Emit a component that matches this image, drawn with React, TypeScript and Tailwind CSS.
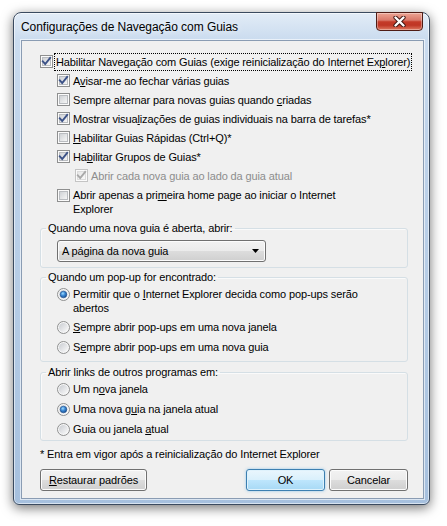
import React from "react";

function Check({ checked = false, disabled = false }: { checked?: boolean; disabled?: boolean }) {
  return (
    <svg width="13" height="13" viewBox="0 0 13 13" className="shrink-0 block">
      <defs>
        <linearGradient id={disabled ? "cbgd" : "cbg"} x1="0" y1="0" x2="1" y2="1">
          <stop offset="0" stopColor={disabled ? "#e6e6e6" : "#cdd0d4"} />
          <stop offset="1" stopColor={disabled ? "#fbfbfb" : "#f8f8f8"} />
        </linearGradient>
      </defs>
      <rect x="0.5" y="0.5" width="12" height="12" fill="#fbfbfb" stroke={disabled ? "#c4c4c4" : "#8e8f8f"} />
      <rect x="2.5" y="2.5" width="8" height="8" fill={disabled ? "url(#cbgd)" : "url(#cbg)"} stroke={disabled ? "#dcdcdc" : "#b9bcc0"} strokeWidth="1" />
      {checked && (
        <path
          d="M2.8 6.4 L5.2 9 L10.2 2.8"
          fill="none"
          stroke={disabled ? "#a9a9a9" : "#3c5287"}
          strokeWidth="1.9"
          strokeLinecap="square"
          strokeLinejoin="miter"
        />
      )}
    </svg>
  );
}

function Radio({ checked = false }: { checked?: boolean }) {
  return (
    <svg width="13" height="13" viewBox="0 0 13 13" className="shrink-0 block">
      <defs>
        <linearGradient id="rbg" x1="0" y1="0" x2="1" y2="1">
          <stop offset="0" stopColor="#c9ccd1" />
          <stop offset="1" stopColor="#fbfbfb" />
        </linearGradient>
        <radialGradient id="rdot" cx="0.4" cy="0.35" r="0.7">
          <stop offset="0" stopColor="#9fdcff" />
          <stop offset="0.45" stopColor="#3d8ad6" />
          <stop offset="1" stopColor="#174a8b" />
        </radialGradient>
      </defs>
      <circle cx="6.5" cy="6.5" r="6" fill="#f7f7f7" stroke="#8e8f8f" />
      <circle cx="6.5" cy="6.5" r="4.5" fill="url(#rbg)" />
      {checked && <circle cx="6.5" cy="6.5" r="3.3" fill="url(#rdot)" stroke="#1d4f8f" strokeWidth="0.6" />}
    </svg>
  );
}

function CheckRow({
  children,
  checked,
  disabled,
  indent,
}: {
  children: React.ReactNode;
  checked?: boolean;
  disabled?: boolean;
  indent: string;
}) {
  return (
    <div className={`flex items-center h-[19px] ${indent}`}>
      <Check checked={checked} disabled={disabled} />
      <span className={`ml-[3px] leading-[14px] whitespace-nowrap ${disabled ? "text-[#8d8d8d]" : ""}`}>{children}</span>
    </div>
  );
}

function RadioRow({ children, checked }: { children: React.ReactNode; checked?: boolean }) {
  return (
    <div className="flex items-center h-[20px]">
      <Radio checked={checked} />
      <span className="ml-[3px] leading-[14px] whitespace-nowrap">{children}</span>
    </div>
  );
}

const btn =
  "h-[22px] flex items-center justify-center rounded-[3px] border border-[#707070] bg-[linear-gradient(to_bottom,#f2f2f2_0%,#ebebeb_50%,#dddddd_50%,#cfcfcf_100%)] shadow-[inset_0_0_0_1px_#fcfcfc]";

const fs = "border border-[#d5dfe5] rounded-[3px] shadow-[inset_1px_1px_0_#fafafa]";
const lg = "ml-[5px] px-[2px] leading-[14px]";

export default function App() {
  return (
    <div className="w-[447px] h-[526px] bg-white pt-[12px] pl-[13px] font-['Liberation_Sans',Arial,sans-serif] text-[11px] tracking-[-0.12px] text-black overflow-hidden">
      <div className="w-[417px] h-[493px] flex flex-col rounded-t-[8px] rounded-b-[6px] border border-[#3a4a5f] bg-[linear-gradient(to_bottom,#e2ecf7_0px,#cbdcef_26px,#bfd3ea_120px,#b4cbe5_300px,#a6c0de_100%)] shadow-[inset_0_0_0_1px_rgba(255,255,255,0.55),0_3px_12px_rgba(0,0,0,0.55)]">
        <div className="h-[27px] flex shrink-0">
          <div className="pl-[7px] pt-[7px] text-[12px] leading-[14px] tracking-[-0.05px] [text-shadow:0_0_7px_#ffffff]">
            Configurações de Navegação com Guias
          </div>
          <div className="ml-auto mr-[6px] -mt-[1px] w-[47px] h-[19px] rounded-b-[4px] border border-[#4f1c15] bg-[linear-gradient(to_bottom,#eda594_0%,#d9796a_42%,#c43a28_52%,#bf3625_72%,#de7a61_100%)] shadow-[inset_0_0_0_1px_rgba(255,255,255,0.35)] flex items-center justify-center">
            <svg width="13" height="11" viewBox="0 0 13 11">
              <path d="M2.5 1.5 L10.5 9.5 M10.5 1.5 L2.5 9.5" stroke="#3b1410" strokeWidth="4.2" strokeLinecap="round" />
              <path d="M2.5 1.5 L10.5 9.5 M10.5 1.5 L2.5 9.5" stroke="#ffffff" strokeWidth="2.4" strokeLinecap="round" />
            </svg>
          </div>
        </div>
        <div className="flex-1 ml-[7px] mr-[5px] mb-[5px] border border-[#8a9cb3] bg-[#f0f0f0] shadow-[0_0_0_1px_rgba(255,255,255,0.6)] pt-[11px] pl-[18px] pr-[15px] flex flex-col">
          <div className="flex items-center h-[19px]">
            <Check checked />
            <span className="ml-[1px] px-[1px] h-[18px] leading-[16px] border border-dotted border-black whitespace-nowrap">
              Habilitar Navegação com Guias (exige reinicialização do Internet Ex<u>p</u>lorer)
            </span>
          </div>
          <CheckRow checked indent="pl-[17px]">
            A<u>v</u>isar-me ao fechar várias guias
          </CheckRow>
          <CheckRow indent="pl-[17px]">
            Sempre alternar para novas guias quando <u>c</u>riadas
          </CheckRow>
          <CheckRow checked indent="pl-[17px]">
            Mostrar visua<u>l</u>izações de guias individuais na barra de tarefas*
          </CheckRow>
          <CheckRow indent="pl-[17px]">
            <u>H</u>abilitar Guias Rápidas (Ctrl+Q)*
          </CheckRow>
          <CheckRow checked indent="pl-[17px]">
            Ha<u>b</u>ilitar Grupos de Guias*
          </CheckRow>
          <CheckRow checked disabled indent="pl-[35px]">
            Abrir cada nova guia ao lado da guia atual
          </CheckRow>
          <div className="flex items-start pl-[17px] mt-[3px]">
            <div className="mt-[1px]">
              <Check />
            </div>
            <span className="ml-[3px] leading-[14px]">
              Abrir apenas a pri<u>m</u>eira home page ao iniciar o Internet
              <br />
              Explorer
            </span>
          </div>

          <fieldset className={`mt-[5px] ${fs} pb-[5px]`}>
            <legend className={lg}>Quando uma nova guia é aberta, abrir:</legend>
            <div className="pl-[16px]">
              <div className={`${btn} mt-[5px] w-[209px] !justify-between pl-[4px] pr-[6px]`}>
                <span>A página da nova guia</span>
                <svg width="7" height="4" viewBox="0 0 7 4">
                  <path d="M0 0 H7 L3.5 4 Z" fill="#000" />
                </svg>
              </div>
            </div>
          </fieldset>

          <fieldset className={`mt-[2px] ${fs} pb-[4px]`}>
            <legend className={lg}>Quando um pop-up for encontrado:</legend>
            <div className="pl-[16px]">
              <div className="flex items-start mt-[3px]">
                <div className="mt-[1px]">
                  <Radio checked />
                </div>
                <span className="ml-[3px] leading-[14px]">
                  Permitir que o <u>I</u>nternet Explorer decida como pop-ups serão
                  <br />
                  abertos
                </span>
              </div>
              <div className="mt-[2px]">
                <RadioRow>
                  <u>S</u>empre abrir pop-ups em uma nova janela
                </RadioRow>
                <RadioRow>
                  S<u>e</u>mpre abrir pop-ups em uma nova guia
                </RadioRow>
              </div>
            </div>
          </fieldset>

          <fieldset className={`mt-[3px] ${fs} pb-[1px]`}>
            <legend className={lg}>Abrir links de outros programas em:</legend>
            <div className="pl-[16px]">
              <RadioRow>
                Um n<u>o</u>va janela
              </RadioRow>
              <RadioRow checked>
                Uma nova g<u>u</u>ia na janela atual
              </RadioRow>
              <RadioRow>
                Guia ou janela <u>a</u>tual
              </RadioRow>
            </div>
          </fieldset>

          <div className="mt-[6px] leading-[14px]">* Entra em vigor após a reinicialização do Internet Explorer</div>

          <div className="mt-[8px] flex">
            <div className={`${btn} w-[107px]`}>
              <span>
                <u>R</u>estaurar padrões
              </span>
            </div>
            <div className="ml-auto w-[79px] h-[22px] flex items-center justify-center rounded-[3px] border border-[#3c7fb1] bg-[linear-gradient(to_bottom,#eaf6fd_0%,#d9f0fc_50%,#bee6fd_50%,#a7d9f5_100%)] shadow-[inset_0_0_0_1px_#dff2fc,0_0_3px_rgba(60,160,230,0.5)]">
              OK
            </div>
            <div className={`${btn} ml-[4px] w-[79px]`}>Cancelar</div>
          </div>
        </div>
      </div>
    </div>
  );
}
